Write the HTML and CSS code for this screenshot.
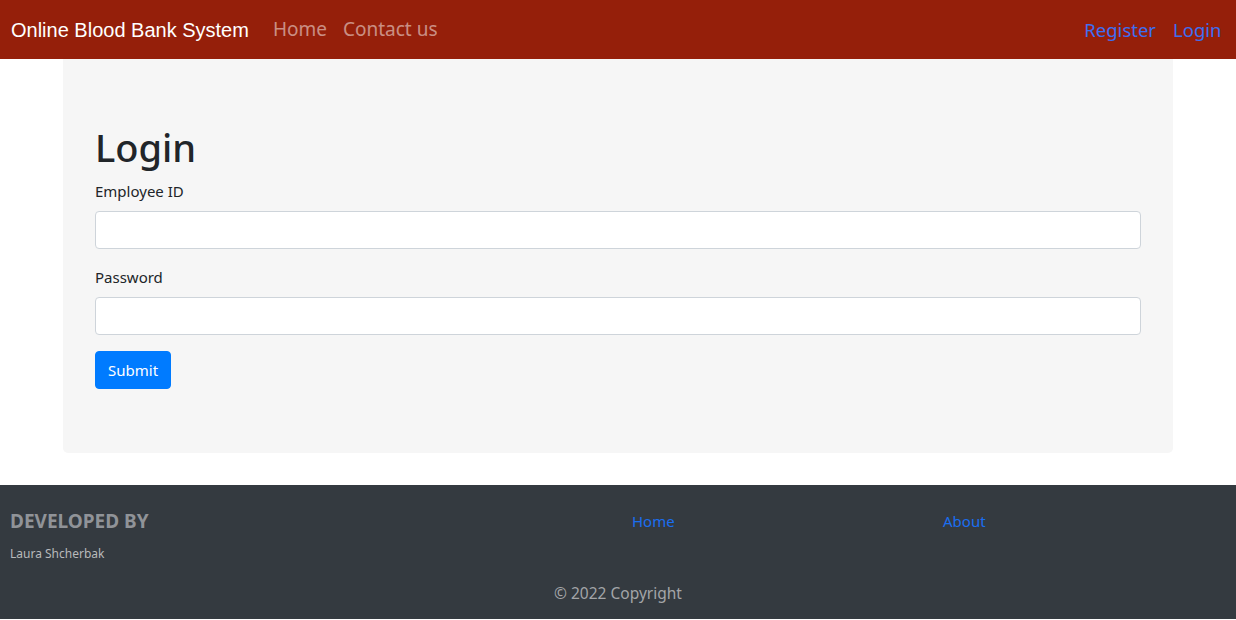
FILE: index.html
```html
<!DOCTYPE html>
<html lang="en">
<head>
<meta charset="utf-8">
<title>Online Blood Bank System - Login</title>
<link rel="stylesheet" href="styles.css">
</head>
<body>
<nav class="navbar">
  <a class="brand" href="#">Online Blood Bank System</a>
  <ul class="nav-links">
    <li><a class="nav-link" href="#">Home</a></li>
    <li><a class="nav-link" href="#">Contact us</a></li>
  </ul>
  <ul class="nav-links nav-right">
    <li><a class="nav-link auth" href="#">Register</a></li>
    <li><a class="nav-link auth" href="#">Login</a></li>
  </ul>
</nav>
<main class="container">
  <section class="jumbotron">
    <h1 class="title">Login</h1>
    <form class="login-form">
      <div class="form-group">
        <label class="form-label" for="emp">Employee ID</label>
        <input class="form-control" id="emp" type="text">
      </div>
      <div class="form-group">
        <label class="form-label" for="pwd">Password</label>
        <input class="form-control" id="pwd" type="password">
      </div>
      <button class="btn-primary" type="button">Submit</button>
    </form>
  </section>
</main>
<footer class="footer">
  <div class="footer-row">
    <div class="footer-col first">
      <h5 class="footer-title">DEVELOPED BY</h5>
      <p class="footer-text">Laura Shcherbak</p>
    </div>
    <div class="footer-col">
      <a class="footer-link" href="#">Home</a>
    </div>
    <div class="footer-col">
      <a class="footer-link" href="#">About</a>
    </div>
  </div>
  <div class="copyright">© 2022 Copyright</div>
</footer>
</body>
</html>
```
FILE: styles.css
```css
* { box-sizing: border-box; }
body {
  margin: 0;
  font-family: "Noto Sans", "Open Sans", sans-serif;
  font-size: 16px;
  line-height: 1.5;
  color: #212529;
  background: #fff;
}
a { text-decoration: none; }
.navbar {
  height: 59px;
  background: #951f0a;
  display: flex;
  align-items: center;
  padding: 0 6px 0 11px;
}
.brand {
  font-family: "Liberation Sans", Arial, sans-serif;
  font-size: 20px;
  color: #fff;
  margin-right: 16px;
}
.nav-links {
  list-style: none;
  margin: 0;
  padding: 0;
  display: flex;
}
.nav-right { margin-left: auto; }
.nav-link {
  display: block;
  padding: 0 8px;
  font-size: 19px;
  color: rgba(255,255,255,0.5);
}
.nav-link.auth { color: #3d6ef2; font-size: 18.5px; padding: 0 8.5px; }
.container {
  width: 1110px;
  margin: 0 auto;
}
.jumbotron {
  background: #f6f6f6;
  padding: 64px 32px;
  border-radius: 0 0 5px 5px;
  margin-bottom: 32px;
}
.title {
  margin: 0 0 8px;
  font-size: 38px;
  font-weight: 500;
  line-height: 48px;
}
.form-group { margin-bottom: 16px; }
.form-label {
  display: inline-block;
  margin-bottom: 8px;
  font-size: 15px;
  line-height: 24px;
}
.form-control {
  display: block;
  width: 100%;
  height: 38px;
  border: 1px solid #ced4da;
  border-radius: 4px;
  background: #fff;
  padding: 6px 12px;
  font: inherit;
}
.btn-primary {
  background: #007bff;
  color: #fff;
  border: 1px solid #007bff;
  border-radius: 4px;
  height: 38px;
  padding: 0 12px;
  font-family: inherit;
  font-size: 15px;
  line-height: 24px;
}
.footer {
  background: #343a40;
}
.footer-row {
  display: grid;
  grid-template-columns: 618px 309px 309px;
  padding-top: 24px;
}
.footer-col { padding-left: 14px; }
.footer-col:last-child { padding-left: 16px; }
.footer-col.first { padding-left: 10px; }
.footer-title {
  margin: 0 0 12px;
  font-size: 19px;
  font-weight: 700;
  line-height: 24px;
  color: #909398;
}
.footer-text {
  margin: 0;
  font-size: 12px;
  line-height: 18px;
  color: #b8b9bb;
}
.footer-link {
  font-size: 15px;
  line-height: 24px;
  color: #1a6ef0;
}
.copyright {
  text-align: center;
  padding: 18px 0 14px;
  color: #a3a5a8;
  font-size: 15.5px;
  line-height: 24px;
}
```
